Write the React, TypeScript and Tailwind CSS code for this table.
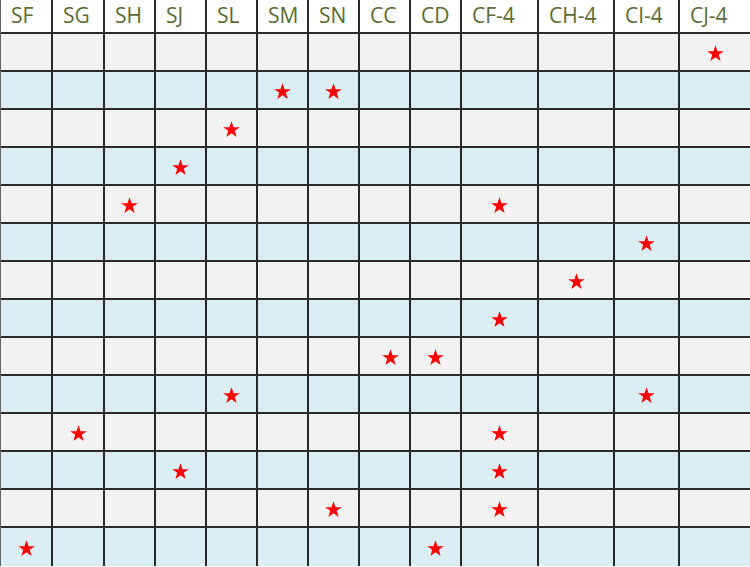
const headers = ["SF", "SG", "SH", "SJ", "SL", "SM", "SN", "CC", "CD", "CF-4", "CH-4", "CI-4", "CJ-4"];

// column indexes holding a star, per row
const rows: number[][] = [
  [12],
  [5, 6],
  [4],
  [3],
  [2, 9],
  [11],
  [10],
  [9],
  [7, 8],
  [4, 11],
  [1, 9],
  [3, 9],
  [6, 9],
  [0, 8],
];

const Star = () => (
  <svg viewBox="0 0 24 24" className="w-[19px] h-[19px]">
    <polygon
      points="12,1.5 14.6,9 22.5,9 16.1,13.7 18.5,21.5 12,16.8 5.5,21.5 7.9,13.7 1.5,9 9.4,9"
      fill="#ff0000"
    />
  </svg>
);

export default function App() {
  return (
    <div
      className="w-[750px] h-[567px] overflow-hidden bg-white"
      style={{ fontFamily: '"Open Sans", "Noto Sans", sans-serif' }}
    >
      <div className="grid grid-cols-[52px_52px_51px_51px_51px_51px_51px_51px_51px_77px_76px_65px_71px] grid-rows-[34px_repeat(14,38px)] border-l border-[#666]">
        {headers.map((h, c) => (
          <div
            key={h}
            className={`flex items-center pl-[10px] text-[21px] font-normal text-[#5b6b33] bg-white border-b-2 border-[#2a2a2a] ${
              c < headers.length - 1 ? "border-r-2" : ""
            }`}
          >
            {h}
          </div>
        ))}
        {rows.map((stars, r) =>
          headers.map((h, c) => (
            <div
              key={`${r}-${h}`}
              className={`flex items-center justify-center border-[#2a2a2a] ${
                r % 2 === 0 ? "bg-[#f2f2f2]" : "bg-[#daeef3]"
              } ${c < headers.length - 1 ? "border-r-2" : ""} ${
                r < rows.length - 1 ? "border-b-2" : ""
              }`}
            >
              {stars.includes(c) && (
                <div className={c === 7 ? "ml-[11px] mt-[2px]" : "mt-[2px]"}>
                  <Star />
                </div>
              )}
            </div>
          ))
        )}
      </div>
    </div>
  );
}
